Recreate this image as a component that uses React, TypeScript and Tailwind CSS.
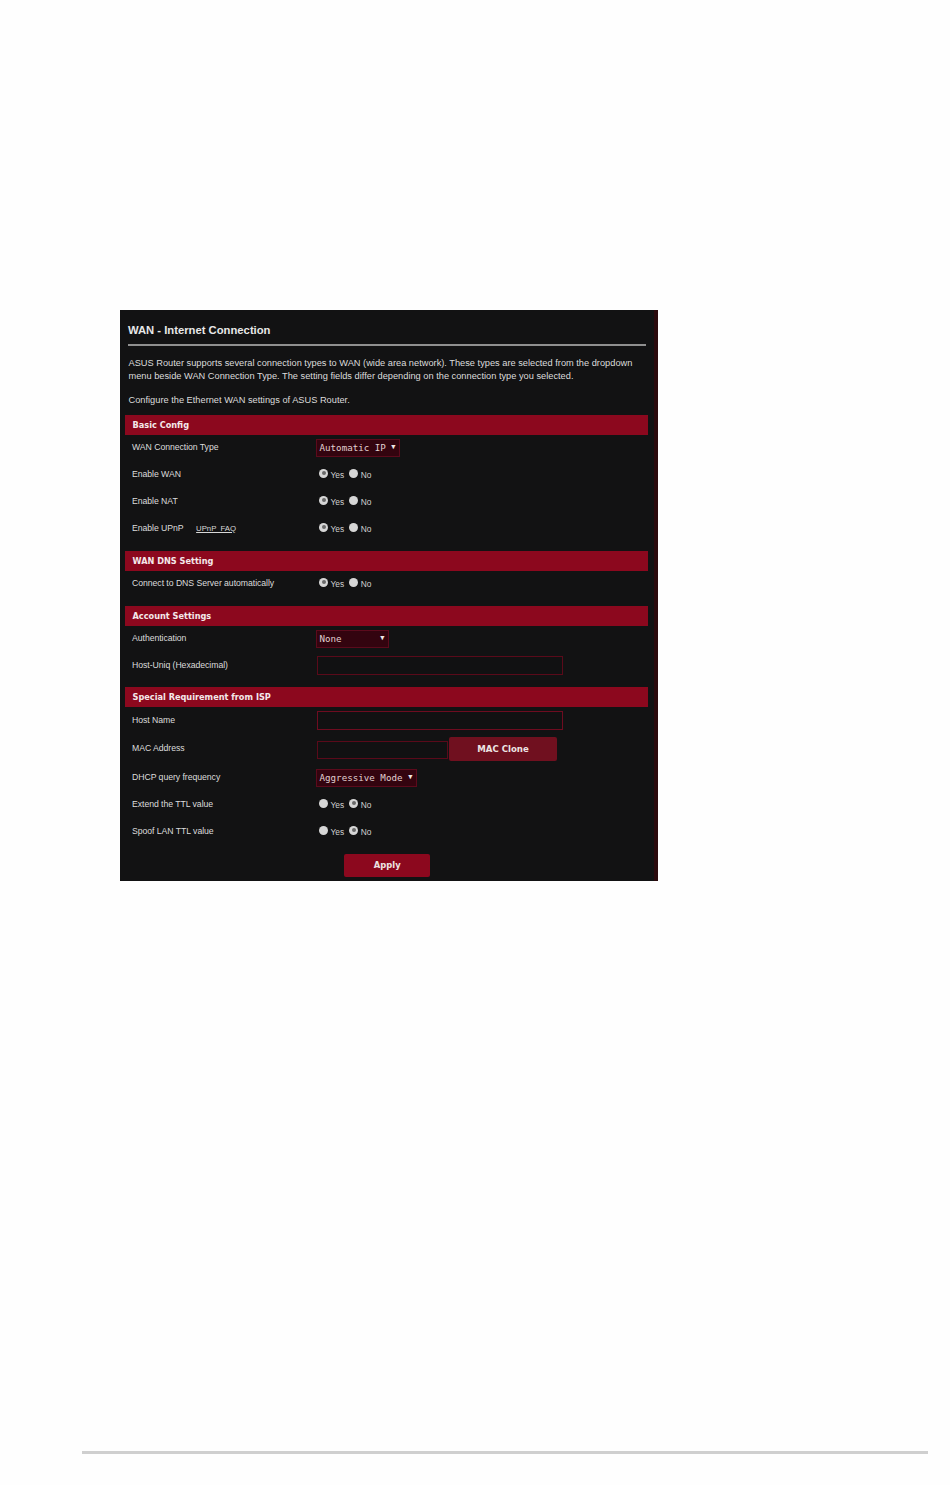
const SANS = "font-['Liberation_Sans',Arial,sans-serif]";

function SectionBar({ title }: { title: string }) {
  return (
    <div className="h-5 bg-[#8c081e] pl-[7.5px] flex items-center font-['DejaVu_Sans',sans-serif] font-bold text-[8.2px] text-[#f4e8ea]">
      {title}
    </div>
  );
}

function Radio({ on, label }: { on: boolean; label: string }) {
  return (
    <span className="flex items-center">
      <span className="w-[9px] h-[9px] rounded-full bg-[#d6d6d6] flex items-center justify-center -mt-[2px]">
        {on && <span className="w-[4px] h-[4px] rounded-full bg-[#6a6a6a]" />}
      </span>
      <span className="ml-[2.5px] mt-[1px] text-[8.4px] text-[#d0d0d0]">{label}</span>
    </span>
  );
}

function YesNo({ yes }: { yes: boolean }) {
  return (
    <div className="flex items-center gap-[5px] pl-[3px]">
      <Radio on={yes} label="Yes" />
      <Radio on={!yes} label="No" />
    </div>
  );
}

function Row({ label, extra, children, tall }: { label: string; extra?: string; children: React.ReactNode; tall?: boolean }) {
  return (
    <div className={`flex items-center pl-[7px] ${tall ? "h-[30px]" : "h-[27px]"}`}>
      <div className="w-[184px] shrink-0 flex items-center text-[8.7px] text-[#dcdcdc] tracking-[-0.05px]">
        <span>{label}</span>
        {extra && <span className="ml-[12.5px] underline text-[7.8px] text-[#d8d8d8]">{extra}</span>}
      </div>
      {children}
    </div>
  );
}

function Select({ text, className }: { text: string; className: string }) {
  return (
    <div className={`h-[18px] bg-[#33040f] border border-[#5c0a1c] pl-[2.5px] pr-[3.5px] flex items-center justify-between font-['DejaVu_Sans_Mono',monospace] text-[9.2px] text-[#e0d0d0] ${className}`}>
      <span>{text}</span>
      <span className="text-[7px] text-[#eee8e8]">▼</span>
    </div>
  );
}

function TextBox({ className }: { className: string }) {
  return <div className={`ml-px bg-[#111112] border ${className}`} />;
}

export default function App() {
  return (
    <div className={`w-[950px] h-[1485px] bg-[#fefefe] pt-[310px] ${SANS}`}>
      <div className="ml-[120px] w-[538px] h-[571px] bg-[#121213] border-r-[4px] border-[#2a0a0d] overflow-hidden">
        <div className="pl-[8px] pr-[8px] pt-[13px] h-[34px] text-[11.25px] font-bold text-[#e8e8e8] leading-[14px]">
          WAN - Internet Connection
        </div>
        <div className="ml-[8px] mr-[8px] h-[2px] bg-[#8f8f8f]" />
        <div className="pl-[8.5px] pt-[11px] text-[9.25px] leading-[12.5px] text-[#dcdcdc] h-[69px]">
          <p>ASUS Router supports several connection types to WAN (wide area network). These types are selected from the dropdown</p>
          <p>menu beside WAN Connection Type. The setting fields differ depending on the connection type you selected.</p>
          <p className="mt-[12px]">Configure the Ethernet WAN settings of ASUS Router.</p>
        </div>
        <div className="ml-[5px] w-[523px]">
          <SectionBar title="Basic Config" />
          <div className="-mt-px">
            <Row label="WAN Connection Type">
              <Select text="Automatic IP" className="w-[84px]" />
            </Row>
            <Row label="Enable WAN"><YesNo yes /></Row>
            <Row label="Enable NAT"><YesNo yes /></Row>
            <Row label="Enable UPnP" extra={"UPnP\u00a0\u00a0FAQ"}><YesNo yes /></Row>
          </div>
          <div className="h-[9px]" />
          <SectionBar title="WAN DNS Setting" />
          <div className="-mt-px">
            <Row label="Connect to DNS Server automatically"><YesNo yes /></Row>
          </div>
          <div className="h-[9px]" />
          <SectionBar title="Account Settings" />
          <div className="-mt-px">
            <Row label="Authentication">
              <Select text="None" className="w-[73px]" />
            </Row>
            <Row label="Host-Uniq (Hexadecimal)">
              <TextBox className="w-[246px] h-[19px] border-[#5a0a1a]" />
            </Row>
          </div>
          <div className="h-[8px]" />
          <SectionBar title="Special Requirement from ISP" />
          <Row label="Host Name">
            <TextBox className="w-[246px] h-[19px] border-[#6e0c20]" />
          </Row>
          <Row label="MAC Address" tall>
            <TextBox className="w-[131px] h-[18px] mt-[1px] border-[#5a0a1a]" />
            <div className="ml-[1px] w-[108px] h-[24px] rounded-[2px] bg-[#70101f] flex items-center justify-center font-['DejaVu_Sans',sans-serif] font-bold text-[8.6px] text-[#ece4e4]">
              MAC Clone
            </div>
          </Row>
          <Row label="DHCP query frequency">
            <Select text="Aggressive Mode" className="w-[101px]" />
          </Row>
          <Row label="Extend the TTL value"><YesNo yes={false} /></Row>
          <Row label="Spoof LAN TTL value"><YesNo yes={false} /></Row>
          <div className="flex justify-center pt-[8.5px] pl-[1.5px]">
            <div className="w-[86px] h-[23px] rounded-[2px] bg-[#8c081e] flex items-center justify-center font-['DejaVu_Sans',sans-serif] font-bold text-[8.4px] text-[#ece4e4]">
              Apply
            </div>
          </div>
        </div>
      </div>
      <div className="mt-[570px] ml-[82px] w-[846px] h-[3px] bg-[#cfcfcf]" />
    </div>
  );
}
